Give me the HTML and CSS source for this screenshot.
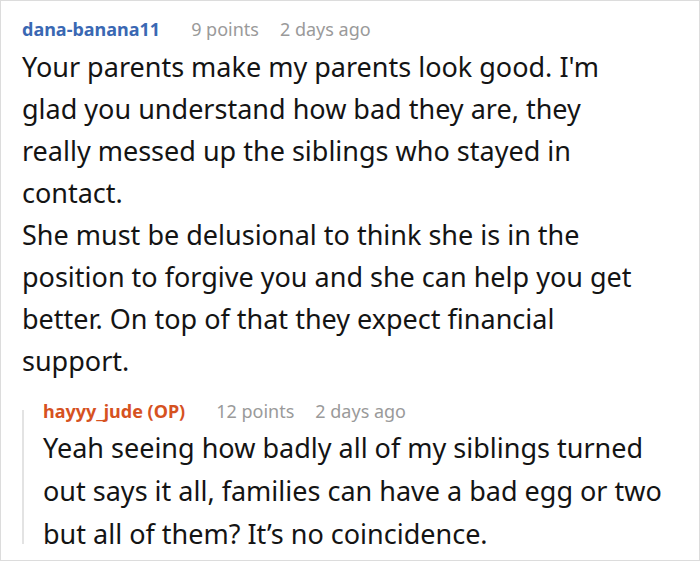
FILE: index.html
```html
<!DOCTYPE html>
<html>
<head>
<meta charset="utf-8">
<link rel="stylesheet" href="styles.css">
</head>
<body>
<div class="frame">
  <div class="comment">
    <div class="meta">
      <span class="author">dana-banana11</span>
      <span class="info">9 points</span>
      <span class="info">2 days ago</span>
    </div>
    <div class="text main-text">
      <p>Your parents make my parents look good. I'm glad you understand how bad they are, they really messed up the siblings who stayed in contact.</p>
      <p>She must be delusional to think she is in the position to forgive you and she can help you get better. On top of that they expect financial support.</p>
    </div>
    <div class="reply">
      <div class="bar"></div>
      <div class="reply-body">
        <div class="meta">
          <span class="author op">hayyy_jude (OP)</span>
          <span class="info">12 points</span>
          <span class="info">2 days ago</span>
        </div>
        <div class="text reply-text">
          <p>Yeah seeing how badly all of my siblings turned out says it all, families can have a bad egg or two but all of them? It’s no coincidence.</p>
        </div>
      </div>
    </div>
  </div>
</div>
</body>
</html>
```
FILE: styles.css
```css
html, body { margin: 0; padding: 0; background: #fff; }
.frame {
  width: 700px;
  height: 561px;
  box-sizing: border-box;
  border: 1px solid #dcdcdc;
  overflow: hidden;
  font-family: "Noto Sans", "Open Sans", sans-serif;
}
.comment { padding: 15px 0 0 21px; }
.meta { display: flex; align-items: baseline; font-size: 18px; line-height: 26px; white-space: nowrap; }
.author { font-weight: 700; color: #3a68b3; margin-right: 31px; }
.author.op { color: #d6521f; }
.info { color: #9a9a9a; margin-right: 21px; }
.text { font-size: 27px; color: #141414; }
.text p { margin: 0; }
.main-text { margin-top: 4px; line-height: 42px; padding-right: 47px; }
.reply { display: flex; align-items: flex-start; margin-top: 16px; }
.bar { width: 2px; height: 134px; margin-top: 12px; background: #e3e3e3; flex-shrink: 0; }
.reply-body { margin-left: 19px; flex: 1; }
.reply-text { margin-top: 2px; line-height: 43px; padding-right: 24px; }
```
